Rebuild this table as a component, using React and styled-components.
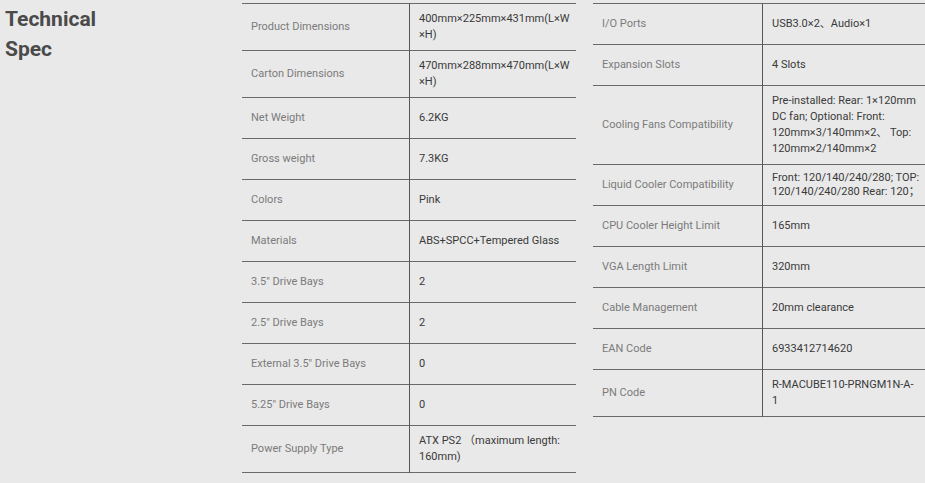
import React from "react";
import styled, { createGlobalStyle } from "styled-components";

const Global = createGlobalStyle`
  html, body {
    margin: 0;
    padding: 0;
    background: #e9e9e9;
    overflow: hidden;
  }
  body {
    font-family: Roboto, "Noto Sans CJK SC", sans-serif;
  }
`;

const Page = styled.div`
  display: flex;
  align-items: flex-start;
  padding: 3px 0 0 5px;
  width: 925px;
  min-height: 483px;
  box-sizing: border-box;
`;

const Heading = styled.h2`
  margin: 1px 0 0;
  width: 237px;
  flex: none;
  font-family: Roboto, sans-serif;
  font-weight: 700;
  font-size: 21px;
  line-height: 30px;
  color: #4a4a4a;
`;

const Tables = styled.div`
  display: flex;
  align-items: flex-start;
  gap: 17px;
`;

const SpecTable = styled.table`
  width: ${(p) => p.$width}px;
  border-collapse: collapse;
  border-top: 1px solid #6a6a6a;
  table-layout: fixed;
`;

const Row = styled.tr`
  border-bottom: 1px solid #6a6a6a;
`;

const Cell = styled.td`
  box-sizing: content-box;
  height: ${(p) => (p.$tight ? 28 : 26)}px;
  padding: ${(p) => (p.$tight ? "6px" : "7px")} ${(p) => p.$pr}px
    ${(p) => (p.$tight ? "6px" : "7px")} 9px;
  font-size: 11px;
  line-height: ${(p) => (p.$tight ? 14 : 16)}px;
  vertical-align: middle;
  word-wrap: break-word;
`;

const LabelCell = styled(Cell)`
  width: ${(p) => p.$w}px;
  color: #7b7b7b;
  border-right: 1px solid #555;
`;

const ValueCell = styled(Cell)`
  color: #3a3a3a;
`;

const left = [
  ["Product Dimensions", "400mm×225mm×431mm(L×W×H)"],
  ["Carton Dimensions", "470mm×288mm×470mm(L×W×H)"],
  ["Net Weight", "6.2KG"],
  ["Gross weight", "7.3KG"],
  ["Colors", "Pink"],
  ["Materials", "ABS+SPCC+Tempered Glass"],
  ['3.5" Drive Bays', "2"],
  ['2.5" Drive Bays', "2"],
  ['External 3.5" Drive Bays', "0"],
  ['5.25" Drive Bays', "0"],
  ["Power Supply Type", "ATX PS2 （maximum length: 160mm)"],
];

const right = [
  ["I/O Ports", "USB3.0×2、Audio×1"],
  ["Expansion Slots", "4 Slots"],
  [
    "Cooling Fans Compatibility",
    "Pre-installed: Rear: 1×120mm DC fan; Optional: Front: 120mm×3/140mm×2、 Top: 120mm×2/140mm×2",
  ],
  [
    "Liquid Cooler Compatibility",
    "Front: 120/140/240/280; TOP: 120/140/240/280 Rear: 120；",
    true,
  ],
  ["CPU Cooler Height Limit", "165mm"],
  ["VGA Length Limit", "320mm"],
  ["Cable Management", "20mm clearance"],
  ["EAN Code", "6933412714620"],
  [
    "PN Code",
    <>
      R-MACUBE110-PRNGM1N-A-
      <br />1
    </>,
  ],
];

function Spec({ rows, width, labelWidth, valuePad }) {
  return (
    <SpecTable $width={width}>
      <tbody>
        {rows.map(([k, v, tight]) => (
          <Row key={k}>
            <LabelCell $w={labelWidth} $pr={8} $tight={tight}>
              {k}
            </LabelCell>
            <ValueCell $pr={valuePad} $tight={tight}>
              {v}
            </ValueCell>
          </Row>
        ))}
      </tbody>
    </SpecTable>
  );
}

export default function App() {
  return (
    <>
      <Global />
      <Page>
        <Heading>
          Technical
          <br />
          Spec
        </Heading>
        <Tables>
          <Spec rows={left} width={334} labelWidth={150} valuePad={2} />
          <Spec rows={right} width={332} labelWidth={152} valuePad={5} />
        </Tables>
      </Page>
    </>
  );
}
